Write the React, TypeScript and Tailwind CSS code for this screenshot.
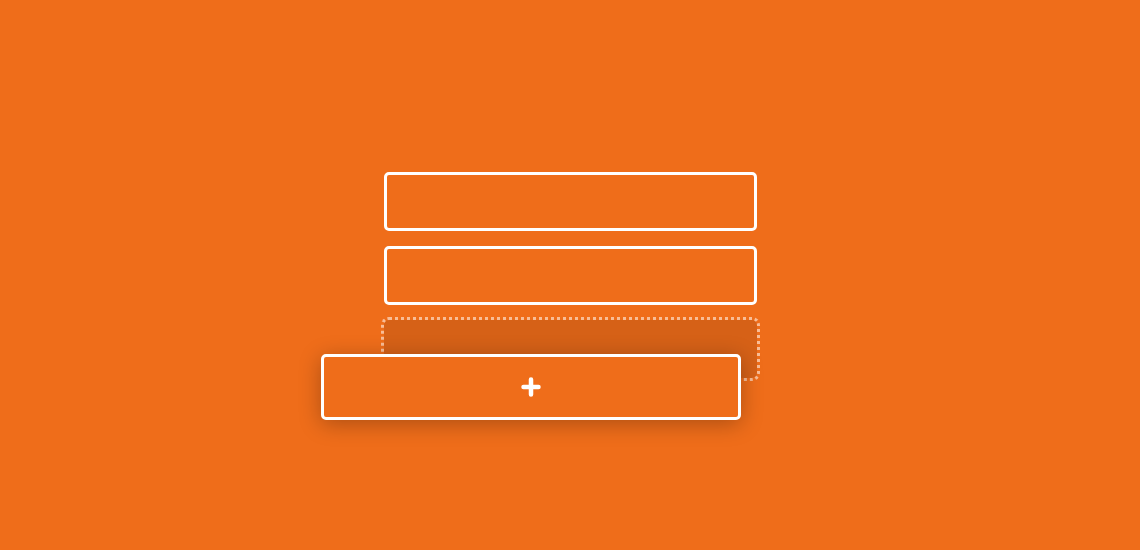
export default function App() {
  return (
    <div className="w-[1140px] h-[550px] bg-[#ef6d1a] flex items-center justify-center">
      <div className="flex flex-col gap-[15px] w-[373px]">
        <div className="h-[59px] rounded-[5px] border-[3px] border-white" />
        <div className="h-[59px] rounded-[5px] border-[3px] border-white" />
        <div className="relative h-[58px] rounded-[5px] bg-black/10 outline-[3px] outline-dotted outline-offset-0 outline-white/55">
          <div className="absolute left-[-63px] top-[34px] w-[420px] h-[66px] rounded-[5px] border-[3px] border-white bg-[#ef6d1a] shadow-[0_4px_22px_rgba(0,0,0,0.28)] flex items-center justify-center">
            <svg width="20" height="20" viewBox="0 0 20 20" className="mt-[-1px]">
              <path d="M10 2.5V17.5M2.5 10H17.5" stroke="white" strokeWidth="4.5" strokeLinecap="round" />
            </svg>
          </div>
        </div>
      </div>
    </div>
  );
}
